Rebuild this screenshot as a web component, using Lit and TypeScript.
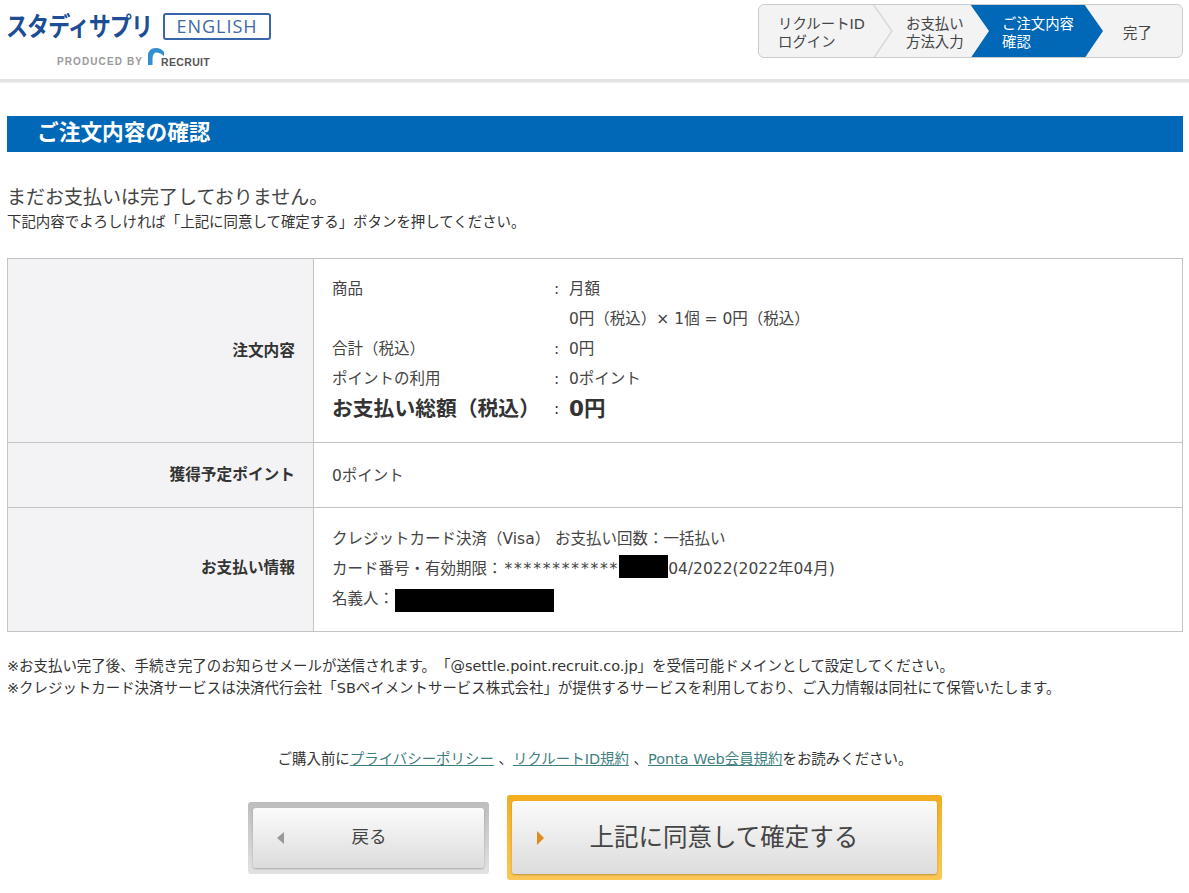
import { LitElement, html, css } from "lit";
import { customElement } from "lit/decorators.js";

@customElement("app-root")
export class AppRoot extends LitElement {
  static styles = css`
    :host { display: block; width: 1189px; height: 893px; overflow: hidden; background: #fff; color: #333;
      font-family: "DejaVu Sans", "Noto Sans CJK JP", sans-serif; font-size: 15.5px; text-spacing-trim: space-all; }
    * { box-sizing: border-box; }
    header { height: 82px; display: flex; justify-content: space-between; padding: 4px 6px 0 7px;
      border-bottom: 3px solid #e3e3e3; box-shadow: 0 1px 1px #f0f0f0; }
    .logo { display: flex; flex-direction: column; width: 270px; }
    .logoTop { display: flex; align-items: center; height: 36px; margin-top: 4px; }
    .brand { font-family: "Noto Sans CJK JP", sans-serif; font-size: 26px; font-weight: 700; color: #1d4d94; line-height: 28px; letter-spacing: -1.2px; width: 156px; white-space: nowrap; transform: translate(-1px, -1px) scaleX(.85); transform-origin: left center; }
    .eng { width: 108px; height: 27px; border: 2px solid #3767a8; border-radius: 3px; color: #3c68a8; font-family: "Open Sans", sans-serif;
      font-size: 18px; letter-spacing: 1px; display: flex; align-items: center; justify-content: center; line-height: 1; }
    .prod { display: flex; align-items: flex-end; height: 24px; margin-left: 50px; color: #9a9a9a; font-family: "Liberation Sans", sans-serif; font-size: 10px; font-weight: 700; letter-spacing: 1.1px; }
    .prod svg { margin: 0 -3px 3px 5px; }
    .prod .rec { color: #555; font-size: 10.5px; letter-spacing: .35px; line-height: 12px; }
    .prod span { line-height: 12px; }
    .steps { position: relative; width: 425px; height: 54px; border: 1px solid #ccc; border-radius: 6px; background: #f3f3f4; font-size: 14.4px; line-height: 18px; color: #444; display: flex; overflow: hidden; }
    .steps svg { position: absolute; left: 0; top: 0; }
    .step { position: relative; display: flex; align-items: center; white-space: nowrap; padding-top: 3px; }
    .s1 { width: 147px; padding-left: 19px; }
    .s2 { width: 96px; }
    .s3 { width: 121px; color: #fff; }
    .s4 { color: #444; padding-left: 0; }
    main { padding: 34px 6px 0 7px; }
    h1 { margin: 0; height: 36px; background: #0068b7; color: #fff; font-family: "Noto Sans CJK JP", sans-serif; font-size: 21.7px; font-weight: 700; line-height: 29px; padding-left: 30px; }
    .lead { margin: 33px 0 0; font-size: 19px; line-height: 24px; color: #444; }
    .sub { margin: 3px 0 0; font-size: 14.45px; line-height: 20px; color: #333; white-space: nowrap; }
    table { margin-top: 26px; width: 1176px; border-collapse: collapse; table-layout: fixed; }
    th, td { border: 1px solid #c4c4c4; padding-bottom: 4px; }
    th { width: 306px; background: #f3f3f5; text-align: right; padding-right: 18px; font-size: 15.7px; font-weight: 700; color: #333; }
    td { padding-left: 18px; padding-right: 18px; color: #444; }
    .r1 { height: 184px; } .r2 { height: 65px; } .r3 { height: 124px; }
    .r3 td { padding-bottom: 2px; }
    .r3 th { padding-bottom: 8px; }
    .line { display: flex; height: 30px; align-items: center; line-height: 30px; white-space: nowrap; }
    .k { width: 222px; } .c { width: 15px; }
    .total { font-size: 20.8px; font-weight: 700; color: #333; height: 30px; }
    .total .c { font-size: 15.5px; font-weight: 400; }
    .total .v { font-size: 21.5px; }
    .mask { letter-spacing: 1.8px; margin-left: 2px; }
    .block { display: inline-block; background: #000; height: 23px; vertical-align: middle; }
    .b1 { width: 49px; margin-bottom: 6px; }
    .b2 { width: 159px; margin-left: 1px; margin-top: 2px; }
    .notes { margin-top: 23px; font-size: 14.45px; line-height: 22px; color: #333; white-space: nowrap; }
    .agree { margin-top: 50px; text-align: center; font-size: 14.45px; line-height: 20px; white-space: nowrap; color: #333; }
    .agree a { color: #3f7f80; text-decoration: underline; }
    .btns { margin-top: 26px; display: flex; justify-content: center; align-items: center; gap: 18px; padding-right: 1px; }
    .btn { display: flex; align-items: center; position: relative; border-radius: 3px; color: #444; }
    .btn i { position: absolute; width: 0; height: 0; border-style: solid; border-color: transparent; }
    .inner { flex: 1; height: 100%; border-radius: 3px; background: linear-gradient(#fbfbfb, #dcdcdc); box-shadow: 0 1px 2px rgba(0,0,0,.25); display: flex; align-items: center; justify-content: center; padding-bottom: 4px; }
    .back { width: 241px; height: 72px; padding: 6px 5px 6px 5px; background: linear-gradient(#bdbdbd, #e2e2e2); font-size: 17.5px; }
    .back i { left: 29px; top: 30px; border-width: 6px 7px 6px 0; border-right-color: #999; }
    .back .inner { padding-left: 2px; }
    .ok { width: 435px; height: 85px; padding: 6px 5px 6px 5px; background: linear-gradient(#f3ae1f, #fbc757); font-size: 24.5px; }
    .ok i { left: 30px; top: 36px; border-width: 7px 0 7px 7px; border-left-color: #e28a1e; }
  `;

  render() {
    return html`
      <header>
        <div class="logo">
          <div class="logoTop"><div class="brand">スタディサプリ</div><div class="eng">ENGLISH</div></div>
          <div class="prod">
            <span>PRODUCED BY</span>
            <svg width="16" height="17" viewBox="0 0 16 17"><path d="M0 17 V8 Q0 0 8 0 Q13 0 16 4 L16 8 Q12 4 8 4.5 Q5 5 4.5 10 V17 Z" fill="#2f8fd0"/></svg>
            <span class="rec">RECRUIT</span>
          </div>
        </div>
        <div class="steps">
          <svg width="425" height="54" viewBox="0 0 425 54">
            <path d="M114 -1 L133 26 L114 54" fill="none" stroke="#d8d8d8" stroke-width="1.5"/>
            <path d="M211 -1 H325 L344 26 L325 54 H211 L230 26 Z" fill="#0068b7"/>
          </svg>
          <div class="step s1">リクルートID<br />ログイン</div>
          <div class="step s2">お支払い<br />方法入力</div>
          <div class="step s3">ご注文内容<br />確認</div>
          <div class="step s4">完了</div>
        </div>
      </header>
      <main>
        <h1>ご注文内容の確認</h1>
        <p class="lead">まだお支払いは完了しておりません。</p>
        <p class="sub">下記内容でよろしければ「上記に同意して確定する」ボタンを押してください。</p>
        <table>
          <tr class="r1">
            <th>注文内容</th>
            <td>
              <div class="line"><span class="k">商品</span><span class="c">:</span>月額</div>
              <div class="line"><span class="k"></span><span class="c"></span>0円（税込）× 1個 = 0円（税込）</div>
              <div class="line"><span class="k">合計（税込）</span><span class="c">:</span>0円</div>
              <div class="line"><span class="k">ポイントの利用</span><span class="c">:</span>0ポイント</div>
              <div class="line total"><span class="k">お支払い総額（税込）</span><span class="c">:</span><span class="v">0円</span></div>
            </td>
          </tr>
          <tr class="r2"><th>獲得予定ポイント</th><td>0ポイント</td></tr>
          <tr class="r3">
            <th>お支払い情報</th>
            <td>
              <div class="line">クレジットカード決済（Visa） お支払い回数：一括払い</div>
              <div class="line">カード番号・有効期限：<span class="mask">************</span><span class="block b1"></span>04/2022(2022年04月)</div>
              <div class="line">名義人：<span class="block b2"></span></div>
            </td>
          </tr>
        </table>
        <div class="notes">
          ※お支払い完了後、手続き完了のお知らせメールが送信されます。「@settle.point.recruit.co.jp」を受信可能ドメインとして設定してください。<br />
          ※クレジットカード決済サービスは決済代行会社「SBペイメントサービス株式会社」が提供するサービスを利用しており、ご入力情報は同社にて保管いたします。
        </div>
        <div class="agree">ご購入前に<a>プライバシーポリシー</a> 、<a>リクルートID規約</a> 、<a>Ponta Web会員規約</a>をお読みください。</div>
        <div class="btns">
          <div class="btn back"><i></i><div class="inner">戻る</div></div>
          <div class="btn ok"><i></i><div class="inner">上記に同意して確定する</div></div>
        </div>
      </main>
    `;
  }
}
